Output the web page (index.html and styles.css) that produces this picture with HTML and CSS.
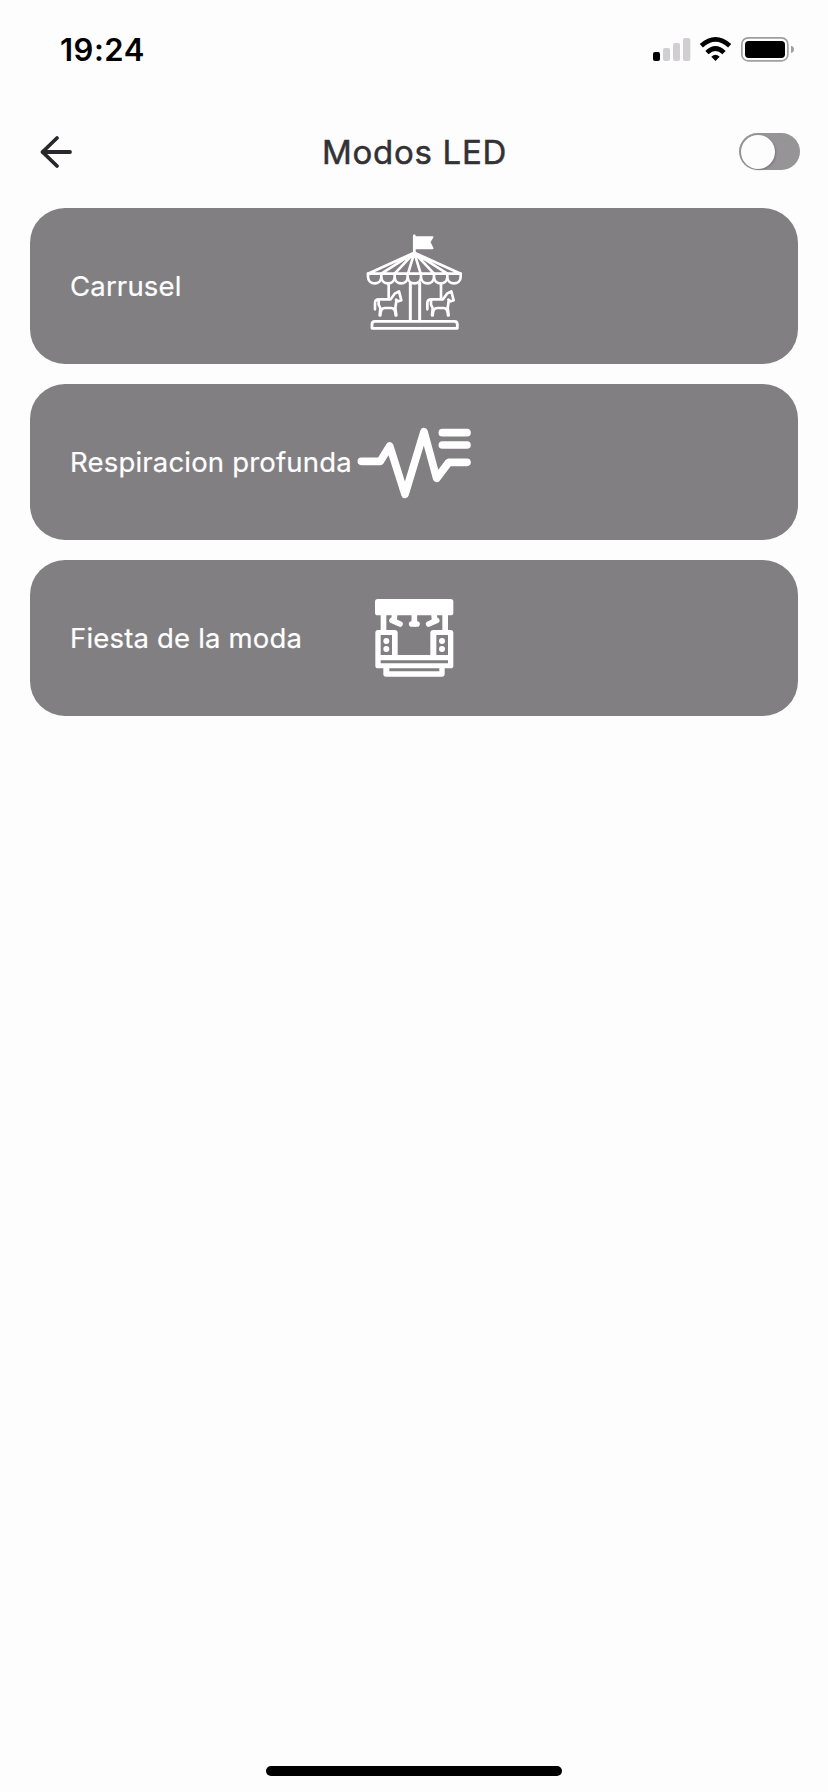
FILE: index.html
```html
<!DOCTYPE html>
<html lang="es">
<head>
<meta charset="utf-8">
<title>Modos LED</title>
<link rel="stylesheet" href="styles.css">
</head>
<body>
<div class="screen">
  <div class="status">
    <span class="time">19:24</span>
    <svg class="indicators" width="144" height="28" viewBox="66 48 432 84">
      <rect x="69" y="96" width="21" height="27" rx="6"/>
      <g fill="#d0ced0">
        <rect x="99" y="84" width="21" height="39" rx="6"/>
        <rect x="129" y="69" width="21" height="54" rx="6"/>
        <rect x="159" y="54" width="22" height="69" rx="6"/>
      </g>
      <path d="M256.500 123L244 110Q256.500 98 269 110Z"/>
      <g fill="none" stroke="#000" stroke-width="14">
        <path d="M231 98Q256.500 73 282 98"/>
        <path d="M214 77Q256.500 39 299 77"/>
      </g>
      <rect x="335.500" y="53.500" width="138" height="69" rx="19" fill="none" stroke="#a09ea0" stroke-width="5"/>
      <rect x="345" y="63" width="120" height="51" rx="11"/>
      <path d="M483 77Q492 79 492 88Q492 97 483 99Z" fill="#a09ea0"/>
    </svg>
  </div>
  <header class="header">
    <svg class="back" width="34" height="34" viewBox="0 0 34 34">
      <path d="M31 17H3.500M18 3L3.500 17L18 31"/>
    </svg>
    <h1 class="title">Modos LED</h1>
    <div class="toggle"><span class="knob"></span></div>
  </header>
  <main class="modes">
    <section class="card">
      <span class="label">Carrusel</span>
      <svg class="icon" viewBox="21 27 342 342">
        <g fill="none" stroke="#fff" stroke-width="8.500" stroke-linejoin="round" stroke-linecap="round">
          <path d="M193 48V96"/>
          <path d="M196 51H248L239 66L248 85H196Z" fill="#fff" stroke-width="5"/>
          <path d="M193 98L54 161H332ZM193 98L94 161M193 98L134 161M193 98L174 161M193 98L212 161M193 98L252 161M193 98L292 161" stroke-width="8"/>
          <path d="M54 161V170C54 197 94 197 94 170V161M94 170C94 197 134 197 134 170V161M134 170C134 197 173 197 173 170V161M173 170C173 197 213 197 213 170V161M213 170C213 197 252 197 252 170V161M252 170C252 197 292 197 292 170V161M292 170C292 197 332 197 332 170V161" stroke-width="8"/>
          <path d="M181 190V302M209 190V302" stroke-width="9"/>
          <path d="M66 325V313Q66 304 75 304H313Q322 304 322 313V325Z"/>
          <path stroke-width="8" d="M116 190V237M75 268V249Q75 238 87 238H122L134 221L147 214L154 241L145 244L138 239M139 243L136 264L139 286M86 239V254L91 264L89 286M91 286Q92 264 104 264H124Q136 264 137 286"/>
          <path transform="translate(157 0)" stroke-width="8" d="M116 190V237M75 268V249Q75 238 87 238H122L134 221L147 214L154 241L145 244L138 239M139 243L136 264L139 286M86 239V254L91 264L89 286M91 286Q92 264 104 264H124Q136 264 137 286"/>
        </g>
      </svg>
    </section>
    <section class="card">
      <span class="label">Respiracion profunda</span>
      <svg class="icon" viewBox="51 -15 342 342">
        <path d="M64 154H121L149 108L195 253L252 65L290 205L326 157H381M307 68H381M307 105H381" fill="none" stroke="#fff" stroke-width="23" stroke-linecap="round" stroke-linejoin="round"/>
      </svg>
    </section>
    <section class="card">
      <span class="label">Fiesta de la moda</span>
      <svg class="icon" viewBox="-9 -12 342 342">
        <g fill="#fff">
          <rect x="45" y="42" width="235" height="49" rx="8"/>
          <path d="M62 88H79V138H62ZM247 88H264V138H247Z"/>
          <path fill-rule="evenodd" d="M54 135H104Q113 135 113 144V210H211V144Q211 135 220 135H271Q280 135 280 144V242Q280 250 272 250H254V268Q254 275 247 275H78Q70 275 70 268V250H54Q46 250 46 242V144Q46 135 54 135ZM62 150V210H96V150ZM229 150V210H264V150ZM62 226V235H264V226ZM88 250V259H238V250Z"/>
          <circle cx="79" cy="168" r="9"/><circle cx="79" cy="192" r="9"/>
          <circle cx="246" cy="168" r="9"/><circle cx="246" cy="192" r="9"/>
        </g>
        <g fill="none" stroke="#fff" stroke-width="17" stroke-linecap="round" stroke-linejoin="round">
          <path d="M96 106L120 117M230 106L206 117M155 117H171"/>
          <path d="M104 88L102 106M163 88V116M222 88L224 106"/>
        </g>
      </svg>
    </section>
  </main>
  <div class="home"></div>
</div>
</body>
</html>
```
FILE: styles.css
```css
body {
  margin: 0;
  background: #fdfdfd;
  font-family: Inter, "Liberation Sans", sans-serif;
}
.screen {
  display: flex;
  flex-direction: column;
  height: 1792px;
  box-sizing: border-box;
  padding-bottom: 16px;
}
.status {
  display: flex;
  align-items: center;
  justify-content: space-between;
  height: 100px;
  padding: 0 32px 0 60px;
}
.time {
  padding-bottom: 2px;
  font-size: 31px;
  font-weight: 600;
  letter-spacing: 0.500px;
}
.header {
  display: grid;
  grid-template-columns: 61px 1fr 61px;
  align-items: center;
  height: 104px;
  box-sizing: border-box;
  padding: 0 28px 0 39px;
}
.back {
  fill: none;
  stroke: #29272b;
  stroke-width: 3.800;
  stroke-linecap: round;
  stroke-linejoin: round;
}
.title {
  margin: 0;
  padding-right: 10px;
  text-align: center;
  font-size: 33px;
  font-weight: 400;
  line-height: 40px;
  letter-spacing: 0.700px;
  color: #333134;
  -webkit-text-stroke: 0.500px #333134;
}
.toggle {
  width: 61px;
  height: 37px;
  box-sizing: border-box;
  margin-bottom: 1px;
  padding: 1.500px;
  border-radius: 19px;
  background: #969496;
}
.knob {
  display: block;
  width: 34px;
  height: 34px;
  border-radius: 50%;
  background: #fdfdfd;
  box-shadow: 1px 1px 2px rgba(0, 0, 0, 0.2);
}
.modes {
  display: flex;
  flex-direction: column;
  gap: 20px;
  padding: 4px 30px 0;
}
.card {
  display: grid;
  grid-template-columns: minmax(0, 1fr) 114px minmax(0, 1fr);
  align-items: center;
  height: 156px;
  box-sizing: border-box;
  padding: 0 40px;
  border-radius: 35px;
  background: #817f81;
}
.label {
  font-size: 27.500px;
  line-height: 36px;
  padding-bottom: 1px;
  letter-spacing: 0.180px;
  color: #fff;
  white-space: nowrap;
  -webkit-text-stroke: 0.200px #fff;
}
.icon {
  width: 114px;
  height: 114px;
}
.home {
  width: 296px;
  height: 10px;
  margin: auto auto 0;
  border-radius: 5px;
  background: #000;
}
```
